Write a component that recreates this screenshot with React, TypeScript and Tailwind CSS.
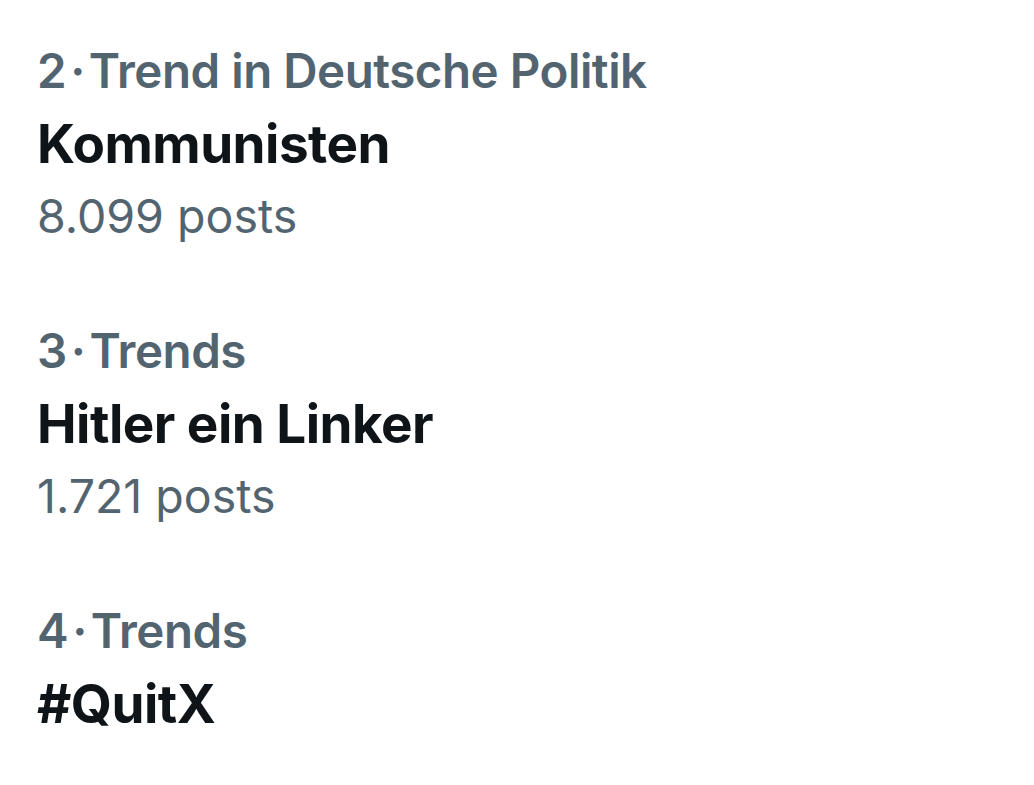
const trends = [
  { rank: 2, category: 'Trend in Deutsche Politik', name: 'Kommunisten', posts: '8.099 posts' },
  { rank: 3, category: 'Trends', name: 'Hitler ein Linker', posts: '1.721 posts' },
  { rank: 4, category: 'Trends', name: '#QuitX', posts: null },
]

function App() {
  return (
    <div className="h-screen overflow-hidden bg-white pl-[37px] pt-[33px] font-['Inter',sans-serif]">
      <div className="flex flex-col gap-[61px]">
        {trends.map((t) => (
          <div key={t.rank}>
            <div className="text-[47.5px] leading-[75px] font-semibold text-[#536471] tracking-[-0.01em]">
              {t.rank}
              <span className="mx-[4px]">·</span>
              {t.category}
            </div>
            <div className="text-[53px] leading-[72px] font-bold text-[#0f1419] tracking-[-0.01em]">{t.name}</div>
            {t.posts && <div className="text-[46.5px] leading-[72px] text-[#536471]">{t.posts}</div>}
          </div>
        ))}
      </div>
    </div>
  )
}

export default App
